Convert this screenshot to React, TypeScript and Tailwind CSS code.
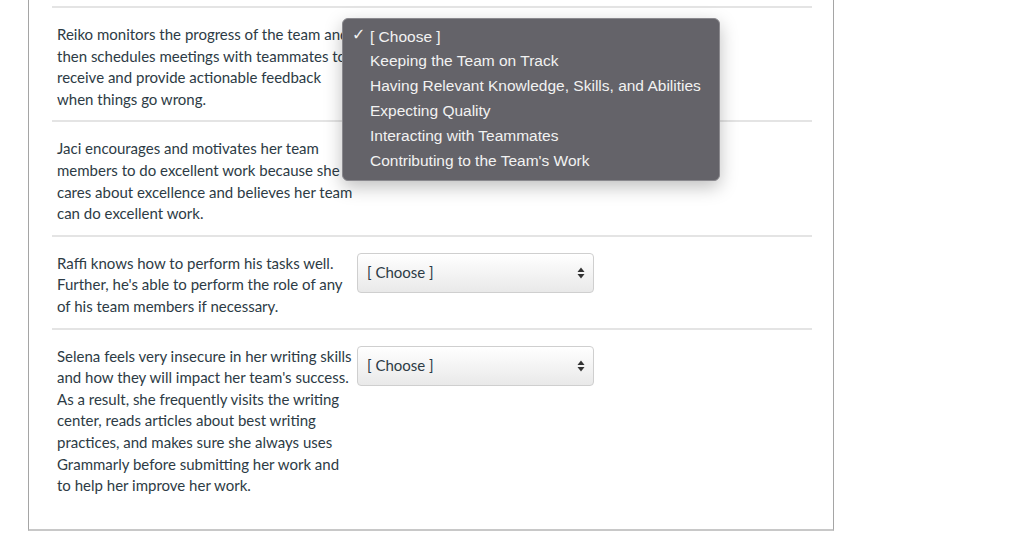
import React from 'react';

const rows = [
  'Reiko monitors the progress of the team and then schedules meetings with teammates to receive and provide actionable feedback when things go wrong.',
  'Jaci encourages and motivates her team members to do excellent work because she cares about excellence and believes her team can do excellent work.',
  "Raffi knows how to perform his tasks well. Further, he's able to perform the role of any of his team members if necessary.",
  "Selena feels very insecure in her writing skills and how they will impact her team's success. As a result, she frequently visits the writing center, reads articles about best writing practices, and makes sure she always uses Grammarly before submitting her work and to help her improve her work.",
];

const options = [
  '[ Choose ]',
  'Keeping the Team on Track',
  'Having Relevant Knowledge, Skills, and Abilities',
  'Expecting Quality',
  'Interacting with Teammates',
  "Contributing to the Team's Work",
];

function FakeSelect() {
  return (
    <div className="ml-[2px] flex h-[40px] w-[237px] shrink-0 items-center justify-between rounded-[4px] border border-[#cfcfcf] bg-gradient-to-b from-[#ffffff] to-[#e9e9e9] pl-[9px] pr-[8px] text-[#2d3b45] shadow-[inset_0_1px_0_#fff]">
      <span>[ Choose ]</span>
      <svg width="8" height="12" viewBox="0 0 8 12">
        <path d="M4 0.5 L7.5 5 H0.5 Z" fill="#333" />
        <path d="M4 11.5 L7.5 7 H0.5 Z" fill="#333" />
      </svg>
    </div>
  );
}

export default function App() {
  return (
    <div className="relative min-h-[557px] bg-white pl-[28px] font-['Lato','Noto_Sans',sans-serif] text-[15px] leading-[21.6px] text-[#2d3b45]">
      <div className="w-[806px] border-b-2 border-l border-r border-b-[#c8c8c8] border-l-[#a5a5a5] border-r-[#a5a5a5] pb-[22px] pl-[23px] pr-[21px] pt-[6px]">
        {rows.map((text, i) => (
          <div key={i} className="flex items-start border-t-2 border-[#e4e4e4] pb-[10px] pl-[5px] pt-[16px]">
            <div className="w-[298px] shrink-0">{text}</div>
            <FakeSelect />
          </div>
        ))}
      </div>

      {/* open native popup menu */}
      <div className="absolute left-[342px] top-[18px] w-[378px] rounded-[6px] border border-[#8a898e] bg-[#646369] pb-[7px] pt-[5px] font-['Liberation_Sans','Helvetica',sans-serif] text-[15.5px] text-[#f2f2f2] shadow-[0_6px_18px_rgba(0,0,0,0.25)]">
        {options.map((o, i) => (
          <div key={o} className="relative flex h-[24.8px] items-center pl-[27px]">
            {i === 0 && <span className="absolute left-[9px] top-[0px] font-['DejaVu_Sans',sans-serif] text-[16px]">✓</span>}
            {o}
          </div>
        ))}
      </div>
    </div>
  );
}
